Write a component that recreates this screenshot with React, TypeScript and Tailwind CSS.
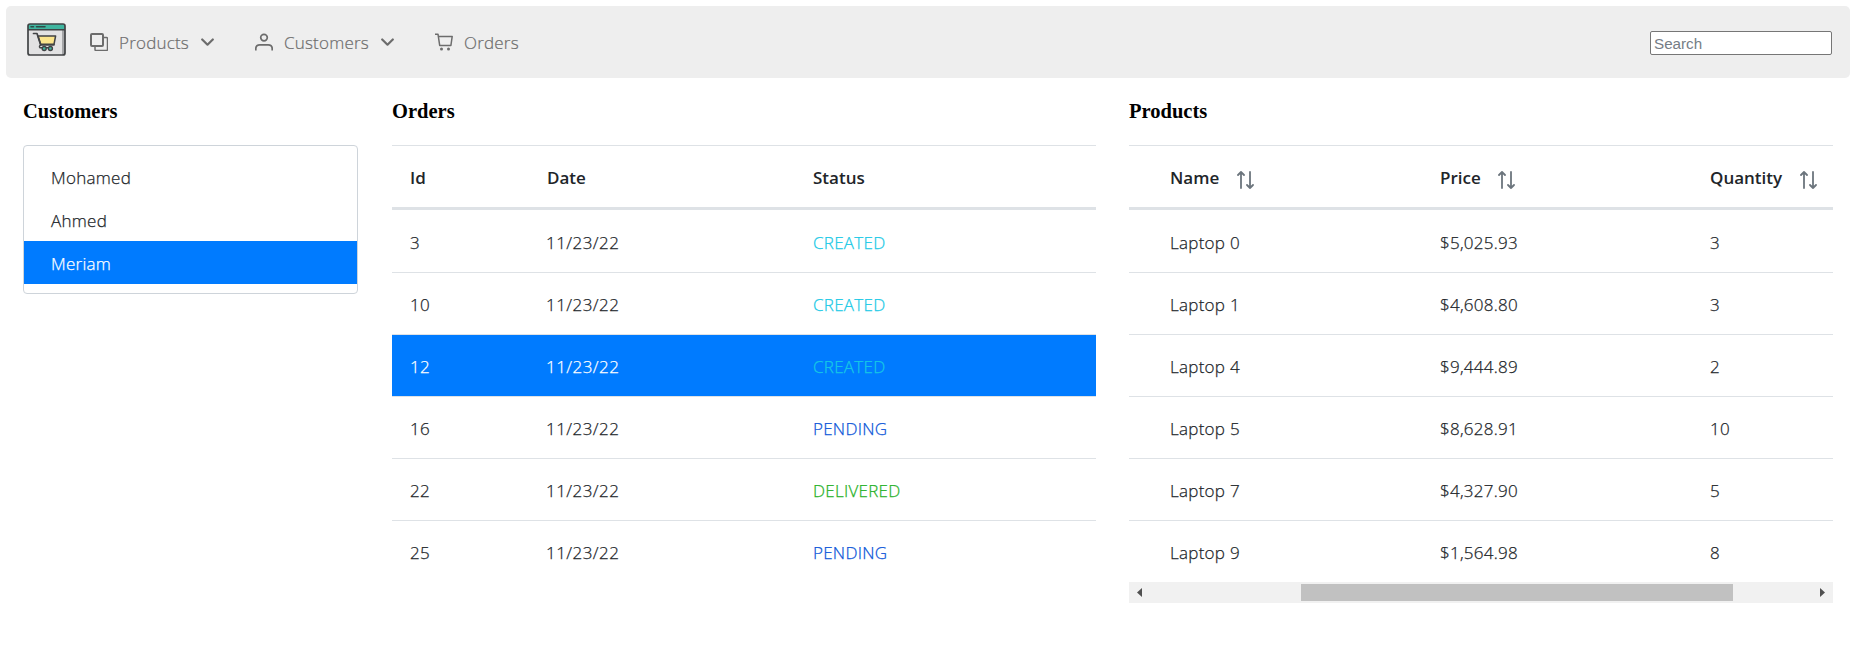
import React from "react";

const customers = ["Mohamed", "Ahmed", "Meriam"];

const orders = [
  { id: 3, date: "11/23/22", status: "CREATED" },
  { id: 10, date: "11/23/22", status: "CREATED" },
  { id: 12, date: "11/23/22", status: "CREATED" },
  { id: 16, date: "11/23/22", status: "PENDING" },
  { id: 22, date: "11/23/22", status: "DELIVERED" },
  { id: 25, date: "11/23/22", status: "PENDING" },
];

const products = [
  { name: "Laptop 0", price: "$5,025.93", quantity: 3 },
  { name: "Laptop 1", price: "$4,608.80", quantity: 3 },
  { name: "Laptop 4", price: "$9,444.89", quantity: 2 },
  { name: "Laptop 5", price: "$8,628.91", quantity: 10 },
  { name: "Laptop 7", price: "$4,327.90", quantity: 5 },
  { name: "Laptop 9", price: "$1,564.98", quantity: 8 },
];

const statusColor: Record<string, string> = {
  CREATED: "text-[#17c9e6]",
  PENDING: "text-[#0a55d8]",
  DELIVERED: "text-[#1fb025]",
};

const Logo = () => (
  <svg className="h-[33px] w-[39px] shrink-0" viewBox="0 0 39 33" fill="none">
    <rect x="1" y="1" width="37" height="31" rx="2" fill="#e2e2e3" />
    <path d="M35 7h3v23q0 2-2 2h-1z" fill="#a5a6a8" />
    <path d="M1 7V3q0-2 2-2h33q2 0 2 2v4z" fill="#3fb59f" />
    <rect x="1" y="1" width="37" height="31" rx="2" stroke="#414345" strokeWidth="1.7" />
    <path d="M1 6.7h37" stroke="#414345" strokeWidth="1.4" />
    <path d="M4 3.7h2.5M9.5 3.7h8.5" stroke="#2f4a47" strokeWidth="1.6" strokeLinecap="round" />
    <path d="M11 13h17.6l-1.6 8.3H13.7z" fill="#fbe58c" stroke="#414345" strokeWidth="1.5" strokeLinejoin="round" />
    <path d="M6.5 10.5H10l3.6 11.3H27" stroke="#414345" strokeWidth="1.7" strokeLinecap="round" strokeLinejoin="round" />
    <path d="M13.6 22.2q-2 1.2-.6 2.6h9" stroke="#414345" strokeWidth="1.4" strokeLinecap="round" />
    <circle cx="17.2" cy="25.5" r="2" fill="#3fb59f" stroke="#414345" strokeWidth="1.4" />
    <circle cx="23.4" cy="25.5" r="2" fill="#3fb59f" stroke="#414345" strokeWidth="1.4" />
  </svg>
);

const CloneIcon = () => (
  <svg className="size-[18px] shrink-0" viewBox="0 0 18 18" fill="none" stroke="currentColor" strokeLinejoin="round">
    <rect x="1" y="1" width="12" height="12" rx="1" strokeWidth="2" />
    <path d="M14 4.5h2.5q1 0 1 1v11q0 1-1 1H6q-1 0-1-1V14" strokeWidth="1.5" />
  </svg>
);

const UserIcon = () => (
  <svg className="size-[18px] shrink-0" viewBox="0 0 18 18" fill="none" stroke="currentColor" strokeWidth="1.7">
    <circle cx="9" cy="4.6" r="3.3" />
    <path d="M.8 17.5v-1.7q0-4 4-4h8.4q4 0 4 4v1.7" />
  </svg>
);

const CartIcon = () => (
  <svg className="size-[18px] shrink-0" viewBox="0 0 18 18" fill="none" stroke="currentColor" strokeWidth="1.5" strokeLinejoin="round">
    <path d="M0 1.2h3l1.7 11.3h11.2l1.3-9H3.4" />
    <circle cx="6.5" cy="16" r="1.5" fill="currentColor" stroke="none" />
    <circle cx="13.5" cy="16" r="1.5" fill="currentColor" stroke="none" />
  </svg>
);

const ChevronIcon = () => (
  <svg className="h-[9px] w-[13px] shrink-0" viewBox="0 0 13 9" fill="none" stroke="currentColor" strokeWidth="2.2" strokeLinecap="round" strokeLinejoin="round">
    <path d="M1.2 1.5l5.3 5.2 5.3-5.2" />
  </svg>
);

const SortIcon = () => (
  <svg className="h-[18px] w-[17px] shrink-0 text-[#6c757d]" viewBox="0 0 17 18" fill="none" stroke="currentColor" strokeWidth="1.8" strokeLinecap="round" strokeLinejoin="round">
    <path d="M4 17V1.2M1 4l3-3 3 3M13 1v16M10 14l3 3 3-3" />
  </svg>
);

const Title = ({ children }: { children: React.ReactNode }) => (
  <h3 className="mt-[21px] mb-[22px] h-6 font-['Liberation_Serif',serif] text-[20.5px] leading-6 font-bold text-black">
    {children}
  </h3>
);

const headRow = "grid h-[65px] border-t border-b-3 border-[#dee2e6] pt-[3px] font-semibold";
const bodyRow = "grid h-[62px] border-b pt-0.5 first:h-[63px] first:pt-[3px] last:h-[61px] last:border-b-0 border-[#dee2e6]";
const bodyText = "font-light tracking-[0.27px] [-webkit-text-stroke:0.25px_currentColor]";
const navText = "mt-0.5 font-light tracking-[0.2px] [-webkit-text-stroke:0.2px_currentColor]";
const orderCols = "grid-cols-[137px_266px_1fr]";
const productCols = "grid-cols-[269px_270px_1fr]";

export default function App() {
  return (
    <div className="h-[652px] overflow-hidden bg-white p-1.5 font-['Open_Sans',sans-serif] text-[17px] text-[#212529]">
      <nav className="mr-px flex h-[72px] items-center rounded-[5px] bg-[#eeeeee] pr-[18px] pl-[21px] text-[#6c6c6c]">
        <div className="mb-[5px]">
          <Logo />
        </div>
        <div className="ml-6 flex items-center">
          <CloneIcon />
          <span className={`ml-[11px] w-[82px] ${navText}`}>Products</span>
          <ChevronIcon />
        </div>
        <div className="ml-[41px] flex items-center">
          <UserIcon />
          <span className={`ml-[11px] w-[97px] ${navText}`}>Customers</span>
          <ChevronIcon />
        </div>
        <div className="ml-[41px] flex items-center">
          <CartIcon />
          <span className={`ml-[11px] ${navText}`}>Orders</span>
        </div>
        <input
          type="text"
          placeholder="Search"
          className="mt-0.5 ml-auto h-6 w-[182px] rounded-[2px] border border-[#767676] bg-white px-[3px] font-['Liberation_Sans',sans-serif] text-[15.2px] placeholder:text-[#757d86]"
        />
      </nav>

      <main className="flex pl-[17px]">
        <section className="w-[335px]">
          <Title>Customers</Title>
          <ul className={`h-[149px] rounded-[4px] border border-[#ced4da] pt-[9px] ${bodyText}`}>
            {customers.map((name) => (
              <li
                key={name}
                className={`flex h-[43px] items-center pt-0.5 pl-[27px] ${name === "Meriam" ? "bg-[#007bff] text-white" : ""}`}
              >
                {name}
              </li>
            ))}
          </ul>
        </section>

        <section className="ml-[34px] w-[704px]">
          <Title>Orders</Title>
          <div className={`${headRow} ${orderCols}`}>
            {["Id", "Date", "Status"].map((label) => (
              <div key={label} className="flex items-center pl-[18px]">
                {label}
              </div>
            ))}
          </div>
          <div className={bodyText}>
            {orders.map((o) => (
              <div key={o.id} className={`${bodyRow} ${orderCols} ${o.id === 12 ? "bg-[#007bff] text-white" : ""}`}>
                <div className="flex items-center pl-[18px]">{o.id}</div>
                <div className="flex items-center pl-[17px] tracking-[0.45px]">{o.date}</div>
                <div className={`flex items-center pl-[18px] ${statusColor[o.status]}`}>{o.status}</div>
              </div>
            ))}
          </div>
        </section>

        <section className="ml-[33px] w-[704px]">
          <Title>Products</Title>
          <div className={`${headRow} ${productCols} pl-[41px]`}>
            {[
              { label: "Name", width: "w-[67px]" },
              { label: "Price", width: "w-[58px]" },
              { label: "Quantity", width: "w-[90px]" },
            ].map((h) => (
              <div key={h.label} className="flex items-center not-first:pl-px">
                <span className={h.width}>{h.label}</span>
                <span className="mt-[3px]">
                  <SortIcon />
                </span>
              </div>
            ))}
          </div>
          <div className={bodyText}>
            {products.map((p) => (
              <div key={p.name} className={`${bodyRow} ${productCols} pl-[41px]`}>
                <div className="flex items-center">{p.name}</div>
                <div className="flex items-center pl-px">{p.price}</div>
                <div className="flex items-center pl-px">{p.quantity}</div>
              </div>
            ))}
          </div>
          <div className="flex h-[21px] items-center bg-[#f1f1f1] px-2">
            <svg className="h-[9px] w-[5px]" viewBox="0 0 5 9" fill="#505050">
              <path d="M5 0v9L0 4.5z" />
            </svg>
            <div className="ml-[159px] h-[17px] w-[432px] bg-[#c1c1c1]" />
            <svg className="ml-auto h-[9px] w-[5px]" viewBox="0 0 5 9" fill="#505050">
              <path d="M0 0v9l5-4.5z" />
            </svg>
          </div>
        </section>
      </main>
    </div>
  );
}
